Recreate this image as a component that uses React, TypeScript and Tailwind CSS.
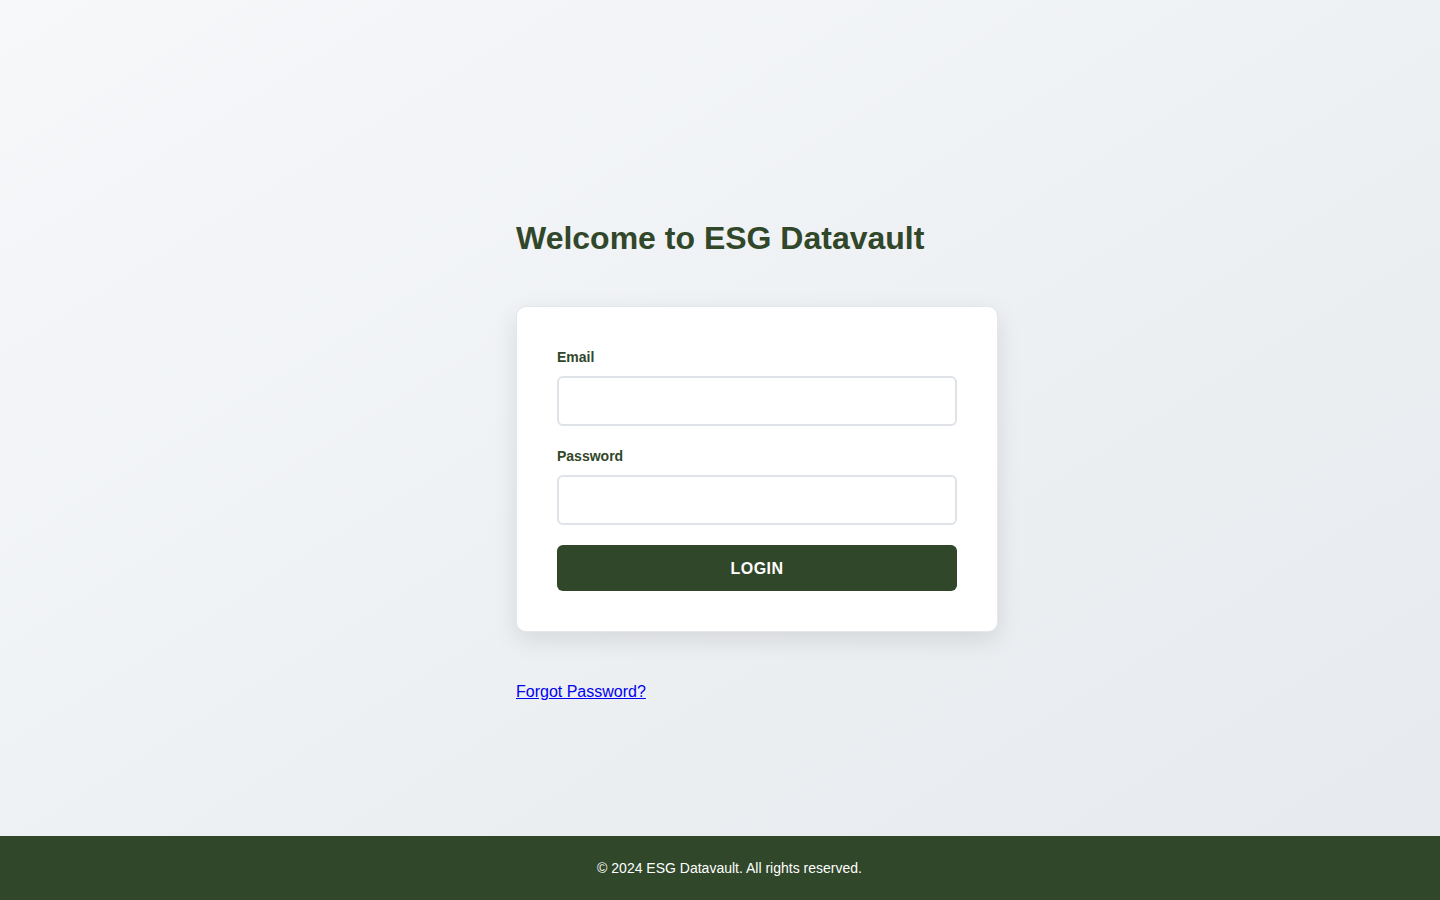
import React from "react";

export default function App() {
  return (
    <div
      className="min-h-screen flex flex-col bg-gradient-to-br from-[#f6f8fa] to-[#e6e9ed]"
      style={{ fontFamily: '"Liberation Sans", Arial, sans-serif' }}
    >
      <main className="flex-1 flex justify-center pt-[218px]">
        <div className="w-[408px] flex flex-col items-start">
          <h1 className="text-[32px] leading-10 font-bold text-[#30472a] mb-12 whitespace-nowrap">
            Welcome to ESG Datavault
          </h1>
          <div className="w-[482px] shrink-0 bg-white rounded-[10px] border border-[#e3e6ea] shadow-[0_8px_24px_rgba(0,0,0,0.10)] p-10">
            <label className="block text-sm leading-5 font-bold text-[#30472a] mb-[9px]">Email</label>
            <input
              type="email"
              className="block w-full h-[50px] rounded-md border-2 border-[#dfe3e8] bg-white px-3 outline-none mb-5"
            />
            <label className="block text-sm leading-5 font-bold text-[#30472a] mb-[9px]">Password</label>
            <input
              type="password"
              className="block w-full h-[50px] rounded-md border-2 border-[#dfe3e8] bg-white px-3 outline-none mb-5"
            />
            <button className="block w-full h-[46px] pt-[2px] rounded-md bg-[#30472a] text-white font-bold text-base tracking-[0.5px]">
              LOGIN
            </button>
          </div>
          <a href="#" className="mt-[50px] text-base leading-5 text-[#0000ee] underline">
            Forgot Password?
          </a>
        </div>
      </main>
      <footer className="h-16 shrink-0 bg-[#30472a] flex items-center justify-center pl-[19px] text-white text-sm">
        © 2024 ESG Datavault. All rights reserved.
      </footer>
    </div>
  );
}
